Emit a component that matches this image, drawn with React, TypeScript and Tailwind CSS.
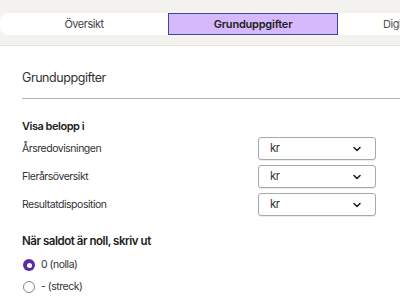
import { ChevronDown } from "lucide-react";

const rows = ["Årsredovisningen", "Flerårsöversikt", "Resultatdisposition"];

function Select() {
  return (
    <div className="flex h-[23px] w-[118px] items-center justify-between rounded-[3px] border border-[#a8a8a8] bg-white pl-[11px] pr-[12px] shadow-[0_1px_1px_rgba(0,0,0,0.08)]">
      <span className="text-[11.5px] text-[#333]">kr</span>
      <ChevronDown size={12} strokeWidth={3.2} className="text-[#222]" />
    </div>
  );
}

export default function App() {
  return (
    <div className="h-[306px] w-[400px] overflow-hidden bg-white font-['Inter',sans-serif] tracking-[-0.03em] text-[#333]">
      <div className="flex h-[46px] items-start border-b border-[#e4e2dd] bg-[#f3f2ef] pt-[13px]">
        <div className="flex h-[22px] w-[520px] shrink-0 rounded-l-[8px] bg-white text-[11px]">
          <div className="flex w-[168px] items-center justify-center text-[#444]">Översikt</div>
          <div className="flex w-[170px] items-center justify-center border border-[#3a4aa0] bg-[#d6b8fc] font-semibold tracking-[-0.02em] text-[#222]">
            Grunduppgifter
          </div>
          <div className="flex w-[170px] items-center pl-[45px] text-[#555]">Digitalisering</div>
        </div>
      </div>

      <div className="pl-[22px]">
        <div className="flex h-[52px] items-end pb-[13px] text-[12.5px] leading-[15px] tracking-[-0.035em] text-[#333]">
          Grunduppgifter
        </div>
        <div className="h-px bg-[#b5b5b5]" />

        <div className="w-[354px] pt-[20px]">
          <div className="text-[11px] font-semibold leading-[14px] text-[#222]">Visa belopp i</div>
          <div className="mt-[4px] flex flex-col gap-[5px]">
            {rows.map((r) => (
              <div key={r} className="flex items-center justify-between">
                <span className="text-[10.5px] text-[#333]">{r}</span>
                <Select />
              </div>
            ))}
          </div>

          <div className="mt-[18px] text-[11.5px] font-semibold leading-[15px] tracking-[-0.04em] text-[#222]">
            När saldot är noll, skriv ut
          </div>
          <div className="mt-[9px] flex flex-col gap-[8px]">
            <label className="flex h-[14px] items-center gap-[6px] text-[10.5px]">
              <span className="ml-px flex h-[12px] w-[12px] items-center justify-center rounded-full bg-[#5b2ca0]">
                <span className="h-[5px] w-[5px] rounded-full bg-white" />
              </span>
              0 (nolla)
            </label>
            <label className="flex h-[14px] items-center gap-[6px] text-[10.5px]">
              <span className="ml-px h-[12px] w-[12px] rounded-full border border-[#888] bg-white" />
              - (streck)
            </label>
          </div>
        </div>
      </div>
    </div>
  );
}
